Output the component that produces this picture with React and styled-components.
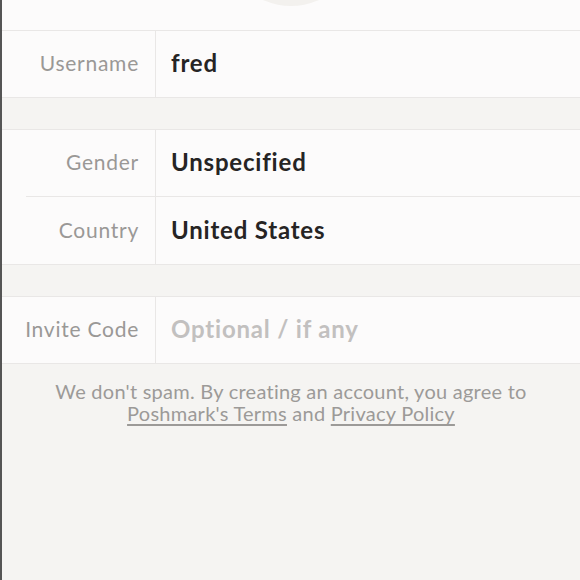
import React from "react";
import styled, { createGlobalStyle } from "styled-components";

const Global = createGlobalStyle`
  html, body { margin: 0; padding: 0; }
  body {
    background: #f5f4f2;
    font-family: "Lato", "Noto Sans", sans-serif;
    width: 580px;
    height: 580px;
    overflow: hidden;
  }
`;

const Page = styled.div`
  height: 580px;
  border-left: 2px solid #555;
  box-sizing: border-box;
  background: #f5f4f2;
  display: flex;
  flex-direction: column;
`;

const Header = styled.div`
  height: 30px;
  background: #fcfbfb;
  overflow: hidden;
  display: flex;
  justify-content: center;
`;

const Avatar = styled.div`
  width: 136px;
  height: 136px;
  border-radius: 50%;
  background: #f3f1ee;
  margin-top: -130px;
  flex-shrink: 0;
`;

const Section = styled.div`
  background: #fcfbfb;
  border-top: 1px solid #e9e7e6;
  border-bottom: 1px solid #e9e7e6;
  margin-top: ${(p) => (p.$gap ? "31px" : "0")};
`;

const Row = styled.div`
  display: flex;
  height: ${(p) => (p.$tall ? "67px" : "66px")};
`;

const Divider = styled.div`
  height: 1px;
  background: #e9e7e6;
  margin-left: 24px;
`;

const Label = styled.div`
  width: 154px;
  flex-shrink: 0;
  box-sizing: border-box;
  border-right: 1px solid #e9e7e6;
  display: flex;
  align-items: center;
  justify-content: flex-end;
  padding: 0 16px 3px 0;
  font-size: 21px;
  color: #9a9896;
  letter-spacing: 0.75px;
`;

const Value = styled.div`
  display: flex;
  align-items: center;
  padding: 0 0 3px 15px;
  font-size: 24px;
  font-weight: 700;
  letter-spacing: 0.8px;
  color: ${(p) => (p.$placeholder ? "#c2c0bf" : "#262424")};
`;

const Note = styled.p`
  margin: 16px 0 0;
  text-align: center;
  font-size: 20px;
  line-height: 22px;
  color: #9c9a98;
  letter-spacing: 0.25px;
`;

const Link = styled.a`
  color: #9c9a98;
  text-decoration: underline;
  text-underline-offset: 3px;
`;

const Field = ({ label, value, placeholder, tall }) => (
  <Row $tall={tall}>
    <Label>{label}</Label>
    <Value $placeholder={placeholder}>{value}</Value>
  </Row>
);

export default function App() {
  return (
    <>
      <Global />
      <Page>
        <Header>
          <Avatar />
        </Header>
        <Section>
          <Field label="Username" value="fred" />
        </Section>
        <Section $gap>
          <Field label="Gender" value="Unspecified" />
          <Divider />
          <Field label="Country" value="United States" tall />
        </Section>
        <Section $gap>
          <Field label="Invite Code" value="Optional / if any" placeholder />
        </Section>
        <Note>
          We don't spam. By creating an account, you agree to
          <br />
          <Link>Poshmark's Terms</Link> and <Link>Privacy Policy</Link>
        </Note>
      </Page>
    </>
  );
}
